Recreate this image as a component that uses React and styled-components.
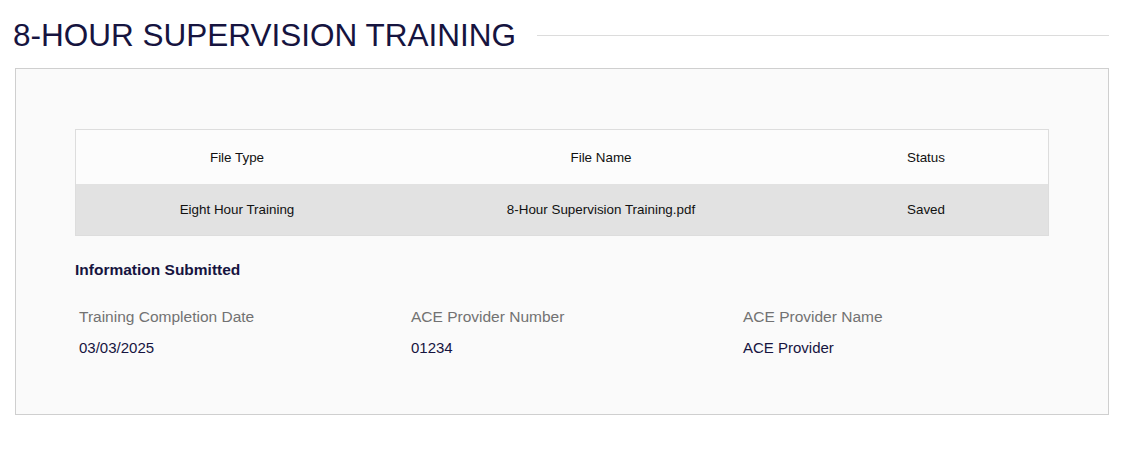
import React from "react";
import styled, { createGlobalStyle } from "styled-components";

const GlobalStyle = createGlobalStyle`
  body {
    margin: 0;
    background: #fff;
    font-family: "Liberation Sans", Arial, Helvetica, sans-serif;
  }
`;

const Page = styled.div`
  padding: 17px 16px 0 15px;
`;

const Header = styled.div`
  display: flex;
  align-items: center;
  gap: 21px;
  margin-bottom: 15px;
`;

const Title = styled.h1`
  margin: 0 0 0 -2px;
  font-size: 31.5px;
  line-height: 36px;
  font-weight: 400;
  color: #16143f;
  white-space: nowrap;
`;

const Rule = styled.div`
  flex: 1;
  height: 1px;
  background: #dcdcdc;
`;

const Panel = styled.section`
  border: 1px solid #cfcfcf;
  background: #fafafa;
  padding: 60px 59px 57px 59px;
`;

const Table = styled.div`
  border: 1px solid #dddddd;
`;

const Row = styled.div`
  display: grid;
  grid-template-columns: 322px 406px 1fr;
  align-items: center;
  height: ${(p) => p.$height}px;
  background: ${(p) => (p.$head ? "#fcfcfc" : "#e2e2e2")};
`;

const Cell = styled.div`
  text-align: center;
  font-size: 13.4px;
  color: #111;
`;

const SectionTitle = styled.h2`
  margin: 25px 0 0;
  font-size: 15.5px;
  line-height: 18px;
  font-weight: 700;
  color: #16143f;
`;

const InfoGrid = styled.div`
  display: grid;
  grid-template-columns: repeat(3, 332px);
  padding-left: 4px;
  margin-top: 29px;
`;

const Field = styled.div`
  display: flex;
  flex-direction: column;
  gap: 13px;
`;

const Label = styled.div`
  font-size: 15.5px;
  line-height: 18px;
  color: #727272;
`;

const Value = styled.div`
  font-size: 15px;
  line-height: 18px;
  color: #16143f;
`;

const files = [
  { type: "Eight Hour Training", name: "8-Hour Supervision Training.pdf", status: "Saved" },
];

const info = [
  { label: "Training Completion Date", value: "03/03/2025" },
  { label: "ACE Provider Number", value: "01234" },
  { label: "ACE Provider Name", value: "ACE Provider" },
];

export default function App() {
  return (
    <>
      <GlobalStyle />
      <Page>
        <Header>
          <Title>8-HOUR SUPERVISION TRAINING</Title>
          <Rule />
        </Header>
        <Panel>
          <Table>
            <Row $head $height={54}>
              <Cell>File Type</Cell>
              <Cell>File Name</Cell>
              <Cell>Status</Cell>
            </Row>
            {files.map((f) => (
              <Row key={f.name} $height={51}>
                <Cell>{f.type}</Cell>
                <Cell>{f.name}</Cell>
                <Cell>{f.status}</Cell>
              </Row>
            ))}
          </Table>
          <SectionTitle>Information Submitted</SectionTitle>
          <InfoGrid>
            {info.map((i) => (
              <Field key={i.label}>
                <Label>{i.label}</Label>
                <Value>{i.value}</Value>
              </Field>
            ))}
          </InfoGrid>
        </Panel>
      </Page>
    </>
  );
}
